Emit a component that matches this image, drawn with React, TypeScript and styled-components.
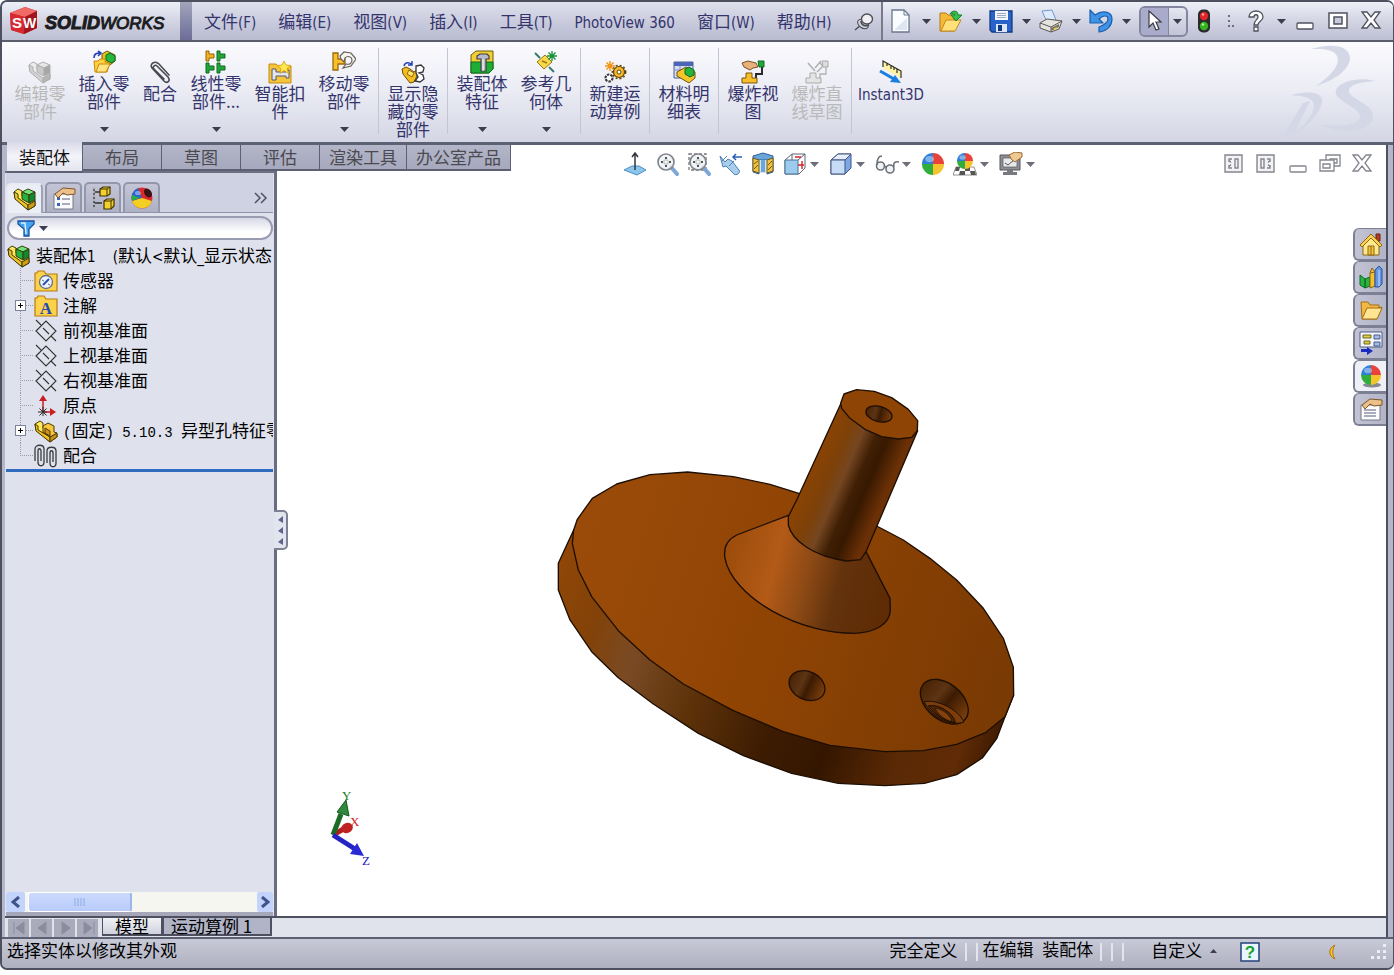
import React from "react";
import styled, { createGlobalStyle, css } from "styled-components";

const ink = "#34346c";
const cjk = '"Noto Sans CJK SC", sans-serif';
const ui = '"DejaVu Sans Condensed", "Noto Sans", "Noto Sans CJK SC", sans-serif';

const GlobalStyle = createGlobalStyle`
  * { box-sizing: border-box; }
  body { margin: 0; background: #fdfdfe; font-family: ${cjk}; font-size: 17px; color: #000; }
  button { font: inherit; color: inherit; background: none; border: 0; padding: 0; margin: 0; }
  svg { display: block; flex: none; }
`;

/* ---------- shell ---------- */
const Page = styled.div`
  height: 100vh;
  min-height: 640px;
  padding-bottom: 5px;
`;
const Window = styled.div`
  height: 100%;
  display: flex;
  flex-direction: column;
  border: 2px solid #4e5060;
  border-width: 2px 1px 2px 2px;
  border-radius: 7px;
  overflow: hidden;
  background: #b4b7cb;
`;
const TitleBar = styled.header`
  display: flex;
  height: 40px;
  flex: none;
  border-bottom: 2px solid #5b5d6d;
  background: linear-gradient(#eef0f8, #d5d7e5 45%, #bdbfd3);
`;
const Brand = styled.div`
  display: flex;
  align-items: center;
  gap: 6px;
  width: 178px;
  padding-left: 7px;
  flex: none;
`;
const BrandName = styled.div`
  display: flex;
  align-items: baseline;
  font: italic 17px/20px "Liberation Sans", sans-serif;
  color: #1c1c22;
  margin-top: 4px;
  -webkit-text-stroke: 1px #1c1c22;
  b { font-size: 18px; }
`;
const BrandEdge = styled.div`
  width: 12px;
  flex: none;
  background: linear-gradient(#a2a4bb, #6b6d98);
`;
const MenuBar = styled.nav`
  display: flex;
  align-items: center;
  gap: 22px;
  padding: 2px 7px 0 12px;
  color: ${ink};
  background: linear-gradient(#dfe0ec, #c6c8db 60%, #b9bbcf);
  border-right: 2px solid #77798c;
`;
const MenuButton = styled.button`
  line-height: 24px;
  white-space: nowrap;
`;
const Latin = styled.span`
  font-family: ${ui};
  font-size: 15px;
`;
const Mono = styled.span`
  font-family: "Liberation Mono", monospace;
  font-size: 14px;
`;
const QuickBar = styled.div`
  display: flex;
  flex: 1;
  align-items: center;
  padding: 0 11px 0 6px;
`;
const QuickButton = styled.button<{ $w?: number }>`
  width: ${(p) => p.$w ?? 50}px;
  height: 28px;
  display: flex;
  align-items: center;
  gap: 9px;
  flex: none;
`;
const SelectTool = styled.div`
  display: flex;
  width: 49px;
  height: 31px;
  flex: none;
  margin-right: 4px;
  border: 2px solid #8486a0;
  border-radius: 6px;
  overflow: hidden;
  button { display: grid; place-items: center; flex: 1; }
  button:first-child { flex: 0 0 28px; background: #a9abca; border-right: 1px solid #8486a0; }
`;
const WindowControls = styled.div`
  display: flex;
  gap: 11px;
  margin-left: auto;
`;

/* ---------- ribbon ---------- */
const Ribbon = styled.section`
  display: flex;
  height: 103px;
  flex: none;
  padding-left: 6px;
  border-bottom: 3px solid #5d6174;
  background: linear-gradient(#fbfbfe, #eeeff6 40%, #d4d6e5);
  position: relative;
`;
const RibbonItem = styled.button<{ $narrow?: boolean; $wide?: boolean; $menu?: boolean; $off?: boolean }>`
  width: ${(p) => (p.$narrow ? 48 : p.$wide ? 74 : 64)}px;
  flex: none;
  display: flex;
  flex-direction: column;
  align-items: center;
  padding: ${(p) => (p.$menu ? 8 : 18)}px 0 10px;
  line-height: 18px;
  white-space: pre;
  color: ${(p) => (p.$off ? "#b9b9b9" : ink)};
  > svg:last-child:not(:first-child) { margin-top: auto; }
`;
const RibbonRule = styled.div`
  width: 1px;
  flex: none;
  margin: 6px 2px 8px;
  background: #c3c5d3;
`;
const Watermark = styled.div`
  margin-left: auto;
  padding: 2px 16px 0 0;
`;

/* ---------- workspace ---------- */
const Workspace = styled.main`
  flex: 1;
  min-height: 0;
  display: flex;
  flex-direction: column;
  margin: 0 5px 0 3px;
  border-right: 2px solid #4e5060;
  background: #fff;
`;
const TopStrip = styled.div`
  display: flex;
  height: 26px;
  flex: none;
`;
const CommandTabs = styled.div`
  display: flex;
  flex: none;
  padding-left: 2px;
  background: #b4b7cb;
`;
const CommandTab = styled.button<{ $on?: boolean }>`
  min-width: 79px;
  height: 26px;
  padding: 0 9px;
  line-height: 22px;
  color: #4a4a50;
  background: linear-gradient(#b3b5c8, #a6a8bd);
  border: solid #5d5f72;
  border-width: 0 1px 2px 0;
  ${(p) =>
    p.$on &&
    css`
      min-width: 76px;
      margin-top: -3px;
      height: 31px;
      color: #111;
      background: linear-gradient(#d8dae8, #f4f4fa 50%, #e3e4ee);
      position: relative;
      z-index: 1;
    `}
`;
const ViewBar = styled.div`
  display: flex;
  flex: 1;
  align-items: flex-start;
  padding: 7px 13px 0 112px;
`;
const ViewButton = styled.button<{ $menu?: boolean }>`
  display: flex;
  align-items: center;
  gap: 3px;
  width: ${(p) => (p.$menu ? 46 : 32)}px;
  height: 24px;
  flex: none;
`;
const DocControls = styled.div`
  display: flex;
  gap: 10px;
  margin-left: auto;
  button { height: 24px; display: grid; place-items: center; }
`;
const Body = styled.div`
  display: flex;
  flex: 1;
  min-height: 0;
`;
const Panel = styled.aside`
  display: flex;
  flex-direction: column;
  width: 272px;
  flex: none;
  background: #dfe2ec;
  border-top: 2px solid #6d6f84;
  border-right: 3px solid #6a6c80;
  padding: 0 1px;
`;
const PanelTabs = styled.div`
  display: flex;
  height: 40px;
  flex: none;
  align-items: flex-end;
  gap: 2px;
  border-bottom: 1px solid #8f92a8;
  background: #cfd2e3;
`;
const PanelTab = styled.button<{ $on?: boolean }>`
  width: 37px;
  height: 30px;
  display: grid;
  place-items: center;
  border: 2px solid #9496aa;
  border-bottom: 0;
  border-radius: 5px 5px 0 0;
  background: linear-gradient(#c3c5d6, #aeb0c4);
  ${(p) => p.$on && css`background: #eceef5; border-color: #e8e9f2; border-right-color: #a0a2b6; margin-bottom: -1px;`}
`;
const Expand = styled.button`
  margin: 0 5px 8px auto;
`;
const Filter = styled.label`
  display: flex;
  align-items: center;
  gap: 4px;
  height: 24px;
  flex: none;
  margin: 3px 0 3px 1px;
  padding: 0 8px;
  border: 2px solid #9a9cb2;
  border-radius: 12px;
  background: linear-gradient(#d6d8e6, #fff 70%);
  input { flex: 1; min-width: 0; border: 0; background: none; outline: 0; font: 14px ${ui}; }
`;
const Tree = styled.ul`
  list-style: none;
  margin: 0;
  padding: 0;
  border-bottom: 3px solid #2f6cc0;
  overflow: hidden;
  flex: none;
`;
const Branch = styled.ul`
  list-style: none;
  margin: 0 0 0 14px;
  padding: 0 0 1px;
`;
const TreeLabel = styled.span`
  padding-bottom: 2px;
  flex: none;
`;
const TreeRow = styled.div`
  display: flex;
  align-items: center;
  height: 25px;
  padding-left: 1px;
  gap: 5px;
  white-space: pre;
`;
const TreeItem = styled.li<{ $last?: boolean }>`
  display: flex;
  align-items: center;
  height: 25px;
  white-space: pre;
  background:
    repeating-linear-gradient(#9a9ca6 0 1px, transparent 1px 2px) 0 0 / 1px ${(p) => (p.$last ? "50%" : "100%")} no-repeat,
    repeating-linear-gradient(90deg, #9a9ca6 0 1px, transparent 1px 2px) 0 50% / 14px 1px no-repeat;
  > svg { margin: 0 5px 0 14px; }
  > button + svg { margin-left: 8px; }
`;
const Toggle = styled.button`
  width: 11px;
  height: 11px;
  flex: none;
  margin-left: -5px;
  border: 1px solid #7c8499;
  background: #fff linear-gradient(#000, #000) 50% 50% / 5px 1px no-repeat;
  display: grid;
  place-items: center;
  &::after { content: ""; width: 1px; height: 5px; background: #000; }
`;
const ScrollBar = styled.div`
  display: flex;
  align-items: center;
  height: 24px;
  flex: none;
  margin-top: auto;
  gap: 3px;
  background: #f6f6f1;
  border-bottom: 4px solid #a6a8b9;
  button { width: 19px; height: 20px; border-radius: 2px; background: #c4d3fb; display: grid; place-items: center; }
  button:last-child { margin-left: auto; width: 16px; }
`;
const Thumb = styled.div`
  width: 104px;
  height: 20px;
  border: 1px solid #fff;
  border-right: 2px solid #9fb5ea;
  border-radius: 3px;
  background: linear-gradient(#cbdafd, #b9cbfa);
  display: grid;
  place-items: center;
`;

/* ---------- graphics area ---------- */
const Viewport = styled.section`
  flex: 1;
  min-width: 0;
  position: relative;
`;
const PanelGrip = styled.button`
  position: absolute;
  left: -3px;
  top: 339px;
  width: 14px;
  height: 40px;
  display: grid;
  place-items: center;
  background: #e3e5ee;
  border: 2px solid #7e8094;
  border-left: 0;
  border-radius: 0 5px 5px 0;
`;
const Triad = styled.div`
  position: absolute;
  left: 49px;
  bottom: 49px;
`;
const TaskPane = styled.div`
  position: absolute;
  right: 0;
  top: 57px;
  display: flex;
  flex-direction: column;
`;
const TaskTab = styled.button<{ $on?: boolean }>`
  width: 33px;
  height: 33px;
  display: grid;
  place-items: center;
  border: 2px solid #7d8094;
  border-width: 1px 0 2px 2px;
  border-radius: 6px 0 0 6px;
  background: ${(p) => (p.$on ? "#eff0f5" : "linear-gradient(90deg, #c2c4d4, #b2b4c7)")};
`;
const SheetBar = styled.div`
  display: flex;
  height: 21px;
  flex: none;
  padding-left: 3px;
  border-top: 2px solid #4e5060;
  background: #e0e3ec;
`;
const SheetNav = styled.div`
  display: flex;
  gap: 2px;
  padding: 1px 4px 0 0;
  button { width: 21px; background: #a9abbb; display: grid; place-items: center; }
`;
const SheetTab = styled.button<{ $on?: boolean }>`
  min-width: ${(p) => (p.$on ? 61 : 109)}px;
  padding: 0 ${(p) => (p.$on ? 12 : 7)}px;
  text-align: left;
  line-height: 14px;
  height: 18px;
  border: solid #4e5060;
  border-width: 0 2px 2px 1px;
  background: ${(p) => (p.$on ? "linear-gradient(#f1f2f7, #cfd1dd)" : "#b1b3c6")};
`;

/* ---------- status bar ---------- */
const StatusBar = styled.footer`
  display: flex;
  align-items: center;
  height: 31px;
  flex: none;
  padding: 0 5px;
  border-top: 2px solid #5d6072;
  background: linear-gradient(#c9cad8, #aeb0bf);
  line-height: 24px;
  > span, > button { white-space: pre; margin-bottom: 7px; }
  > i, > svg, > div { margin-bottom: 4px; }
`;
const StatusGap = styled.div`
  flex: 1;
`;
const StatusRule = styled.i<{ $first?: boolean; $last?: boolean }>`
  width: 2px;
  height: 18px;
  margin-left: ${(p) => (p.$first ? 7 : 0)}px;
  margin-right: ${(p) => (p.$last ? 5 : 9)}px;
  background: #e4e5ec;
  flex: none;
`;
const CustomButton = styled.button`
  display: flex;
  align-items: center;
  gap: 3px;
  margin: 0 22px;
`;
const MoonSlot = styled.div`
  padding: 0 32px 0 68px;
`;

/* ---------- icon drawings ---------- */
type IconProps = { size?: number; box?: number; children: React.ReactNode };
const Icon = ({ size = 24, box = 24, children }: IconProps) => (
  <svg width={size} height={size} viewBox={`0 0 ${box} ${box}`} fill="none" aria-hidden="true">
    {children}
  </svg>
);
const Caret = ({ up, color = "#3c3e50" }: { up?: boolean; color?: string }) => (
  <svg width="9" height="5" viewBox="0 0 9 5" aria-hidden="true">
    <path d={up ? "M1 5h7L4.500 1z" : "M0 0h9L4.500 5z"} fill={color} />
  </svg>
);

const AsmShape = ({ gray }: { gray?: boolean }) => {
  const c = gray
    ? ["#ececec", "#d2d2d2", "#b4b4b4", "#e6e6e6", "#cacaca", "#a6a6a6", "#b0b0b0"]
    : ["#ffe95a", "#edc324", "#d39d12", "#6ce576", "#25b040", "#0f8a2e", "#3d3a10"];
  return (
    <g stroke={c[6]} strokeWidth="1" strokeLinejoin="round">
      <path d="M1 5l4-3 4 2v5l4 3 9 1v6l-7 4L2 11z" fill={c[0]} />
      <path d="M1 5l4 2v4l10 7v5L2 12z" fill={c[1]} />
      <path d="M15 18l7-4v5l-7 4z" fill={c[2]} />
      <path d="M9 5l6-3 7 3-6 3z" fill={c[3]} />
      <path d="M9 5l7 3v8l-7-4z" fill={c[4]} />
      <path d="M16 8l6-3v8l-6 3z" fill={c[5]} />
    </g>
  );
};
const AsmIcon = ({ gray }: { gray?: boolean }) => <Icon><AsmShape gray={gray} /></Icon>;
const PartIcon = () => (
  <Icon>
    <g stroke="#4a3a05" strokeWidth="1" strokeLinejoin="round">
      <path d="M1 5l5-3 3 2v5l10 6 4 0v3l-7 5L2 11z" fill="#ffe95a" />
      <path d="M1 5l3 2v4l12 7v5L2 12z" fill="#edbf20" />
      <path d="M16 18l7-4v4l-7 5z" fill="#c8920f" />
      <path d="M9 7l5-3 6 3v6l3 1-7 4-7-5z" fill="#f7c63c" />
      <path d="M11 9l5 3v5l-5-3z" fill="#d98e1a" />
    </g>
  </Icon>
);
const InsertIcon = () => (
  <Icon>
    <path d="M2 8c0-4 2-5 6-5M6 1l3 2-3 3" stroke="#2340b8" strokeWidth="1.600" />
    <path d="M10 4l5-3 8 4v6l-5 4-8-5z" fill="#e3c21b" stroke="#6d5a08" />
    <path d="M14 5l4-2 5 3v5l-4 2-5-3z" fill="#25b83c" stroke="#0b6a20" />
    <path d="M2 11h4l2-2h5v3l5 1-3 9H3z" fill="#ffcf3f" stroke="#c88a10" />
    <path d="M4 22l3-8h11l-4 8z" fill="#ffe582" stroke="#c88a10" />
  </Icon>
);
const ClipIcon = () => (
  <Icon>
    <path d="M21 15L11 4C7 0 1 4 4 8l12 13c3 3 7 0 4-4L9 6C7 4 4 7 6 9l10 10" stroke="#4a4a50" strokeWidth="1.600" strokeLinecap="round" />
  </Icon>
);
const Bolt = ({ x, y, c, d }: { x: number; y: number; c: string; d: string }) => (
  <g transform={`translate(${x} ${y})`}>
    <path d="M0 0h3v3h5v4H3v3H0z" fill={c} stroke={d} />
  </g>
);
const PatternIcon = () => (
  <Icon>
    <Bolt x={2} y={1} c="#f0b01f" d="#946408" />
    <Bolt x={13} y={1} c="#22a63a" d="#0c6a20" />
    <Bolt x={2} y={13} c="#22a63a" d="#0c6a20" />
    <Bolt x={13} y={13} c="#22a63a" d="#0c6a20" />
  </Icon>
);
const SmartIcon = () => (
  <Icon>
    <path d="M1 4h7l2 2h13v17H1z" fill="#f7c53b" stroke="#c28a12" />
    <path d="M4 9h4v3h10v-2h3v8h-3v-2H8v4H4z" fill="#e2e4ee" stroke="#56586a" />
    <path d="M16 1l2 4 5 .5-4 3 1.500 5-4.500-3-4 3 1-5-4-3 5-.5z" fill="#ffe94d" stroke="#d09a10" strokeWidth=".8" />
  </Icon>
);
const MoveIcon = () => (
  <Icon>
    <path d="M1 3h5v6h7v5H6v6H1z" fill="#f9c02b" stroke="#9a6a0c" strokeWidth="1.300" />
    <path d="M8 6l4-4 7 1 5 6-5 7-8 2 3-4c4 1 6-1 6-4s-4-5-7-2l-1 4-3-3z" fill="#f6f3ee" stroke="#6a625c" strokeWidth="1.200" />
  </Icon>
);
const ShowHideIcon = () => (
  <Icon>
    <path d="M3 6c1-4 5-4 7-2M11 1v4H7" stroke="#2340b8" strokeWidth="1.500" />
    <path d="M1 9l4-2 4 2 4 3 3-2v6l-3 6-4 1-7-9z" fill="#f3bd22" stroke="#6c4e06" />
    <path d="M8 10l5 3-2 4-5-3z" fill="#ffe46a" stroke="#6c4e06" strokeWidth=".8" />
    <path d="M15 6l5-1 3 3-1 4-4 1 4 2 1 4-4 3-5-1 3-4-2-4z" fill="#fff" stroke="#34343a" strokeWidth="1.300" />
  </Icon>
);
const FeatureIcon = () => (
  <Icon>
    <path d="M1 5l5-4h17v18l-4 4H1z" fill="#f3cf35" stroke="#6b5a0a" />
    <path d="M1 12h22v7l-4 4H1z" fill="#1fae34" stroke="#0c6a20" />
    <path d="M7 6l3-2h7l2 2v3h-3v12h-5V9H7z" fill="#b9bcc8" stroke="#3c3e48" strokeWidth="1.200" />
    <path d="M13 9v12" stroke="#fff" />
  </Icon>
);
const RefGeoIcon = () => (
  <Icon>
    <path d="M1 3l5 5M15 17l5 5" stroke="#2f7a6a" strokeWidth="1.800" />
    <path d="M3 12l8-7 7 7-8 7z" fill="#f7d84a" stroke="#9a7610" />
    <path d="M8 11l5 2" stroke="#9a7610" strokeWidth="1.500" />
    <path d="M18 1v10M13 6h10M14.500 2.500l7 7M21.500 2.500l-7 7" stroke="#149334" strokeWidth="1.300" />
  </Icon>
);
const MotionIcon = () => (
  <Icon>
    <circle cx="16" cy="12" r="5.500" fill="#f6b92a" stroke="#5e4208" strokeWidth="1.200" />
    <circle cx="16" cy="12" r="6.700" stroke="#5e4208" strokeWidth="1.400" strokeDasharray="2 2" />
    <circle cx="16" cy="12" r="2" fill="#fff" stroke="#5e4208" />
    <circle cx="6" cy="18" r="3.500" fill="#fff" stroke="#3a3a3f" strokeWidth="2.200" strokeDasharray="2.500 1" />
    <path d="M7 1v10M2 6h10M3.500 2.500l7 7M10.500 2.500l-7 7" stroke="#f29313" strokeWidth="1.400" />
  </Icon>
);
const BomIcon = () => (
  <Icon>
    <path d="M2 2h19v16H2z" fill="#d6dcf2" stroke="#4b5c96" />
    <path d="M2 2h19v4H2z" fill="#4a66b5" />
    <path d="M2 10h19M8 6v12" stroke="#8090c4" />
    <path d="M5 12l9-5 9 5v6l-6 5-12-7z" fill="#f4c62a" stroke="#6e5408" />
    <path d="M13 9l4-2 5 3v5l-4 2-5-3z" fill="#27b33c" stroke="#0c6a20" />
  </Icon>
);
const ExplodeIcon = ({ gray }: { gray?: boolean }) => (
  <Icon>
    {gray ? (
      <path d="M3 3l7 8M10 8l6-7M15 3l3 3-6 6" stroke="#b0b0b0" strokeWidth="1.500" />
    ) : (
      <path d="M1 3l6-2 8 2 2 4-5 1-3 2-6-3z" fill="#e9b27c" stroke="#7c4d22" />
    )}
    <path d="M21 6v8h-6v5h-3" stroke={gray ? "#b0b0b0" : "#2a2a2a"} strokeWidth={gray ? 1.3 : 2} />
    <path d="M17 1h6v6h-5z" fill={gray ? "#ddd" : "#22a63a"} stroke={gray ? "#aaa" : "#0c6a20"} />
    <path d="M5 13h6v5h5v5H1v-5h4z" fill={gray ? "#e4e4e4" : "#f8be2a"} stroke={gray ? "#aaa" : "#7c5606"} />
  </Icon>
);
const Instant3DIcon = () => (
  <Icon>
    <path d="M4 1l18 9v8L4 8z" fill="#fff3a3" />
    <path d="M4 7V1l18 10v7M8 3v3M12 5v4M15 7v3M18 9v4" stroke="#2c2c2c" strokeWidth="1.200" />
    <path d="M1 11l14 8" stroke="#1b7fdc" strokeWidth="3" />
    <path d="M22 23l-11-1 5-7z" fill="#1b7fdc" />
  </Icon>
);
const ribbonIcons: Record<string, React.ReactNode> = {
  edit: <AsmIcon gray />, insert: <InsertIcon />, mate: <ClipIcon />, pattern: <PatternIcon />,
  smart: <SmartIcon />, move: <MoveIcon />, show: <ShowHideIcon />, feature: <FeatureIcon />,
  ref: <RefGeoIcon />, motion: <MotionIcon />, bom: <BomIcon />, explode: <ExplodeIcon />,
  line: <ExplodeIcon gray />, instant: <Instant3DIcon />,
};

const BrandCube = () => (
  <svg width="30" height="30" viewBox="0 0 30 30" aria-hidden="true">
    <path d="M1 7L16 1l12 4v17l-13 6L2 24z" fill="#c8202a" />
    <path d="M1 7L16 1l12 4-12 6z" fill="#ef6a66" />
    <path d="M1 7l15 4-1 17-13-4z" fill="#d62a30" />
    <path d="M16 11l12-6v17l-13 6z" fill="#a3141f" />
    <text x="3" y="22" fontFamily="Liberation Sans" fontWeight="700" fontSize="15" fill="#fff">S</text>
    <text x="14" y="22" fontFamily="Liberation Sans" fontWeight="700" fontSize="14" fill="#fff">W</text>
  </svg>
);
const PinIcon = () => (
  <Icon size={20} box={20}>
    <path d="M1 18l6-5" stroke="#4d4d55" strokeWidth="1.500" />
    <ellipse cx="9" cy="12" rx="6" ry="4" transform="rotate(35 9 12)" fill="#cfcfd6" stroke="#4d4d55" />
    <ellipse cx="13" cy="7" rx="5.500" ry="5" fill="#f0f0f4" stroke="#4d4d55" strokeWidth="1.400" />
    <path d="M7 9c0 4 4 6 8 4" stroke="#4d4d55" strokeWidth="1.500" />
  </Icon>
);
const DocIcon = () => (
  <Icon>
    <path d="M3 1h12l5 5v17H3z" fill="#fafcff" stroke="#6a788e" strokeWidth="1.300" />
    <path d="M5 21h13V9z" fill="#dde6f0" />
    <path d="M15 1v5h5" stroke="#6a788e" />
  </Icon>
);
const OpenIcon = () => (
  <Icon>
    <path d="M1 4h6l2 2h6v16H1z" fill="#f5b93a" stroke="#b77b14" />
    <path d="M2 22L7 11h15l-6 11z" fill="#ffe07a" stroke="#c48a18" />
    <path d="M11 5c2-4 8-4 8 1h4l-6 6-5-6h4c0-2-3-2-5-1z" fill="#35c24a" stroke="#15802a" />
  </Icon>
);
const SaveIcon = () => (
  <Icon>
    <path d="M1 2h22v21H3l-2-2z" fill="#2763c8" stroke="#123a80" strokeWidth="1.300" />
    <path d="M6 2h13v9H6z" fill="#f2f5fb" />
    <path d="M8 4.500h9M8 6.500h9M8 8.500h9" stroke="#8896b0" strokeWidth=".8" />
    <path d="M7 15h11v8H7z" fill="#dde6f6" />
    <path d="M9 16h4v6H9z" fill="#123a80" />
  </Icon>
);
const PrintIcon = () => (
  <Icon>
    <path d="M3 2l10-1 4 10-9 2z" fill="#dceaff" stroke="#7696c8" />
    <path d="M1 14l7-4 15 2-3 8-8 3-11-4z" fill="#e6e4e0" stroke="#5c5850" />
    <path d="M1 14l11 4 11-6M12 18v5" stroke="#5c5850" />
    <path d="M12 19l8-4v3l-8 4z" fill="#77746c" />
    <path d="M15 20l3-1" stroke="#f0d020" strokeWidth="1.500" />
  </Icon>
);
const UndoIcon = () => (
  <Icon>
    <path d="M1 1v13h13l-4-4c4-4 9-4 9 0 0 4-4 6-9 8v5c9-1 13-7 13-13 0-8-10-9-17-4z" fill="#3f93e6" stroke="#1a5fae" strokeWidth="1.200" strokeLinejoin="round" />
  </Icon>
);
const CursorIcon = () => (
  <Icon size={22} box={22}>
    <path d="M6 1v16l4-4 3 7 3-1-3-7h5z" fill="#fff" stroke="#3c3c46" strokeWidth="1.200" />
  </Icon>
);
const TrafficIcon = () => (
  <Icon>
    <rect x="6" y="0.500" width="12" height="23" rx="5" fill="#2a2a2c" />
    <circle cx="12" cy="7" r="4.200" fill="#e0242a" />
    <circle cx="12" cy="17" r="4.200" fill="#35b321" />
    <circle cx="11" cy="5.500" r="1.300" fill="#ff9d98" />
    <circle cx="11" cy="15.500" r="1.300" fill="#b2f29a" />
  </Icon>
);
const DotsIcon = () => (
  <Icon>
    <path d="M8 6h2v2H8zM8 11h2v2H8zM8 16h2v2H8zM12 16h2v2h-2z" fill="#6b6d7e" />
  </Icon>
);
const HelpIcon = () => (
  <Icon>
    <path d="M5 8c0-8 14-8 14 0 0 4-5 4-5 8h-4c0-5 4-5 4-8 0-3-4-3-4 0zM10 18h4v4h-4z" fill="#fff" stroke="#50525f" strokeWidth="1.300" />
  </Icon>
);
const MinIcon = ({ color = "#50525f" }: { color?: string }) => (
  <svg width="22" height="22" viewBox="0 0 22 22" aria-hidden="true">
    <rect x="3" y="13" width="16" height="6" rx="1" fill="#fff" stroke={color} strokeWidth="1.300" />
  </svg>
);
const MaxIcon = () => (
  <svg width="22" height="22" viewBox="0 0 22 22" aria-hidden="true">
    <path d="M2 3h18v15H2z" fill="#fff" stroke="#50525f" strokeWidth="1.500" />
    <path d="M7 7h8v7H7z" fill="#c9cbdc" stroke="#50525f" strokeWidth="1.500" />
  </svg>
);
const CloseIcon = ({ color = "#50525f" }: { color?: string }) => (
  <svg width="22" height="22" viewBox="0 0 22 22" aria-hidden="true">
    <path d="M2 2h5l4 5 4-5h5l-6 8 6 8h-5l-4-5-4 5H2l6-8z" fill="#fff" stroke={color} strokeWidth="1.300" />
  </svg>
);
const RestoreIcon = () => (
  <svg width="22" height="22" viewBox="0 0 22 22" fill="#fff" stroke="#84868f" strokeWidth="1.300" aria-hidden="true">
    <path d="M7 2h14v11H7z" /><path d="M11 6h7v4h-7z" /><path d="M1 7h14v11H1z" /><path d="M4 11h7v4H4z" />
  </svg>
);
const SplitIcon = ({ flip }: { flip?: boolean }) => (
  <svg width="22" height="22" viewBox="0 0 22 22" fill="none" stroke="#84868f" strokeWidth="1.400" aria-hidden="true">
    <path d="M2 2h17v17H2z" fill="#f3f3f5" />
    <g transform={flip ? "matrix(-1 0 0 1 21 0)" : undefined}>
      <path d="M12 6h3v9h-3zM9 6H6v3M6 12v3h3" />
      <path d="M6 7.500l2 2M6 13.500l2-2" />
    </g>
  </svg>
);

/* heads-up view toolbar */
const NormalIcon = () => (
  <Icon>
    <path d="M1 18l8-4h7l7 4-9 5z" fill="#8cc5ee" stroke="#4f8fc0" />
    <path d="M12 18V2M9 5l3-4 3 4" stroke="#33343c" strokeWidth="1.500" />
  </Icon>
);
const ZoomFitIcon = ({ area }: { area?: boolean }) => (
  <Icon>
    {area && <path d="M2 2h17v16H2z" stroke="#777" strokeWidth="1.300" strokeDasharray="3 2" />}
    <path d="M16 15l6 7" stroke="#7ea6d8" strokeWidth="4" strokeLinecap="round" />
    <circle cx="11" cy="10" r="8" fill="#eef1f5" fillOpacity=".8" stroke="#85878f" strokeWidth="1.700" />
    <path d="M11 5v2M11 13v2M6 10h2M14 10h2" stroke="#555" strokeWidth="2" />
    <path d="M9 8h4v4H9z" stroke="#bbb" />
  </Icon>
);
const PrevViewIcon = () => (
  <Icon>
    <path d="M1 4l5 6 3-3 4 2 7 9c2 3-3 6-5 4l-8-8-3 1z" fill="#a9cdec" stroke="#4a82b4" />
    <path d="M3 9l5-5M10 14l5-5" stroke="#4a82b4" />
    <path d="M14 5h9M17 2l-3 3 3 3" stroke="#2b62b8" strokeWidth="1.500" />
  </Icon>
);
const SectionIcon = () => (
  <Icon>
    <path d="M2 4l10-3 10 3v16l-6 2V8H8v14l-6-2z" fill="#6aa6da" stroke="#2f5e90" />
    <path d="M8 8h8v13H8z" fill="#cfe4f6" />
    <path d="M10 8h4v12h-4z" fill="#6aa6da" />
    <path d="M2 6l6 2v13l-6-2zM16 8l6-2v13l-6 2z" fill="#f3c23a" stroke="#6e5a18" />
    <path d="M3 12l4-3M3 17l4-4M17 13l4-4M17 18l4-4" stroke="#6e5a18" />
  </Icon>
);
const OrientIcon = () => (
  <Icon>
    <path d="M2 8l7-6h13v14l-6 6H2z" fill="#fff" stroke="#5a6273" />
    <path d="M2 8h13v14H2z" fill="#9ccbee" stroke="#4a7296" />
    <path d="M15 8l7-6M9 2v6" stroke="#5a6273" />
    <path d="M12 5h6M19 9v8M15 13h6" stroke="#d3222a" strokeWidth="1.400" />
  </Icon>
);
const CubeIcon = () => (
  <Icon>
    <path d="M2 8l7-6h13v14l-6 6H2z" fill="#7da7e4" stroke="#44547e" />
    <path d="M2 8l7-6h13l-6 6z" fill="#e6effb" stroke="#44547e" />
    <path d="M2 8h14v14H2z" fill="#c5dbf6" stroke="#44547e" />
  </Icon>
);
const GlassesIcon = () => (
  <Icon>
    <g stroke="#6d7078" strokeWidth="1.600">
      <circle cx="5.500" cy="14" r="4" fill="#eef3f6" /><circle cx="15" cy="17" r="4" fill="#eef3f6" />
      <path d="M2 13c0-6 2-9 5-9M19 15c-1-4 1-6 5-5M9 14l2 1" />
    </g>
  </Icon>
);
const BallShape = ({ cx = 12, cy = 12, r = 11 }) => (
  <g>
    <path d={`M${cx} ${cy}V${cy - r}A${r} ${r} 0 0 0 ${cx - r} ${cy}z`} fill="#2d7fd8" />
    <path d={`M${cx} ${cy}H${cx + r}A${r} ${r} 0 0 0 ${cx} ${cy - r}z`} fill="#e8423a" />
    <path d={`M${cx} ${cy}V${cy + r}A${r} ${r} 0 0 0 ${cx + r} ${cy}z`} fill="#f5c42c" />
    <path d={`M${cx} ${cy}H${cx - r}A${r} ${r} 0 0 0 ${cx} ${cy + r}z`} fill="#2fae3c" />
    <ellipse cx={cx - r * 0.3} cy={cy - r * 0.45} rx={r * 0.4} ry={r * 0.28} fill="#fff" opacity=".4" />
  </g>
);
const BallIcon = ({ shadow }: { shadow?: boolean }) => (
  <Icon>
    {shadow && <ellipse cx="13" cy="21" rx="9" ry="2.500" fill="#5b5d68" opacity=".7" />}
    <BallShape cy={shadow ? 11 : 12} r={shadow ? 10 : 11} />
  </Icon>
);
const SceneIcon = () => (
  <Icon>
    <path d="M3 15h18l3 8H0z" fill="#fff" stroke="#777" strokeWidth=".8" />
    <path d="M3 15h4l-1 4H2zM12 15h5v4h-5zM7 19h5v4H6zM17 19h5l1 4h-5z" fill="#555" />
    <BallShape cx={12} cy={9} r={8} />
  </Icon>
);
const MonitorIcon = () => (
  <Icon>
    <path d="M1 3h20v15H1z" fill="#8e9094" stroke="#55575c" />
    <path d="M4 6h14v9H4z" fill="#e8e9ea" stroke="#55575c" strokeWidth=".7" />
    <path d="M8 18h6v2h4v3H4v-3h4z" fill="#77797e" />
    <path d="M6 11l3 2 6-5" stroke="#555" />
    <path d="M10 3l6-3 7 1v4l-7 5-3-2z" fill="#f0c892" stroke="#976a3a" />
  </Icon>
);

/* panel and tree */
const PropIcon = ({ plain }: { plain?: boolean }) => (
  <Icon>
    <path d="M2 8h19v15H2z" fill="#fbfbfb" stroke="#77798a" />
    <path d={plain ? "M5 13h12M5 16h12M5 19h12" : "M10 13h8M10 18h8"} stroke="#8d93a8" strokeWidth="1.500" />
    {!plain && <path d="M5 11h3v3H5zM5 17h3v3H5z" fill="#3b62c4" />}
    <path d="M3 8l8-6 12 1v5l-8 1-4-2-5 5z" fill="#ecc08a" stroke="#7d5525" />
  </Icon>
);
const ConfigIcon = () => (
  <Icon>
    <path d="M3 1v22M3 6h6M3 17h8" stroke="#333" strokeWidth="1.300" />
    <path d="M3 1v22" stroke="#fff" strokeDasharray="2 2" />
    <path d="M9 3l3-2h7v7l-3 2H9z" fill="#f5cf2c" stroke="#3c3206" strokeWidth="1.200" />
    <path d="M13 15l3-2h7v7l-3 3h-7z" fill="#f5cf2c" stroke="#3c3206" strokeWidth="1.200" />
    <path d="M9 3h7v7M16 3l3-2M13 15h7v8M20 15l3-2" stroke="#3c3206" />
  </Icon>
);
const PanelBallIcon = () => (
  <Icon>
    <circle cx="12" cy="12" r="10.500" fill="#d92a2c" />
    <path d="M12 12L2 15A10.500 10.500 0 0 1 8 2z" fill="#2866d0" />
    <path d="M12 12L2 15a10.500 10.500 0 0 0 20 0z" fill="#f3cf24" />
    <path d="M10 12L6 13 2 15A10.500 10.500 0 0 1 2 9z" fill="#2fae3c" />
    <ellipse cx="18" cy="7" rx="3.500" ry="5" fill="#3a1414" transform="rotate(-35 18 7)" />
    <ellipse cx="8" cy="7" rx="3" ry="2" fill="#fff" opacity=".4" />
  </Icon>
);
const FunnelIcon = () => (
  <Icon size={18} box={18}>
    <path d="M1 2h16v3l-5 5v7H7v-7L1 5z" fill="#43a6ee" stroke="#1b4fa0" strokeWidth="1.300" />
    <path d="M4 4h4l1 11" stroke="#d6f0ff" strokeWidth="1.500" />
  </Icon>
);
const FolderBase = () => <path d="M1 4h2l1-2h6l2 3h11v17H1z" fill="#fbd24a" stroke="#b87a14" strokeWidth="1.200" />;
const SensorIcon = () => (
  <Icon>
    <FolderBase />
    <circle cx="12" cy="13" r="6.500" fill="#eef3fb" stroke="#64708c" strokeWidth="1.300" />
    <path d="M9 16l6-6" stroke="#2352b8" strokeWidth="2" />
    <path d="M8 11l2 1M14 15l2 1" stroke="#64708c" />
  </Icon>
);
const NoteIcon = () => (
  <Icon>
    <FolderBase />
    <text x="12" y="20" textAnchor="middle" fontFamily="Liberation Serif" fontWeight="700" fontSize="17" fill="#1f4bb4">A</text>
  </Icon>
);
const PlaneIcon = () => (
  <Icon>
    <path d="M2 12L12 2l10 10-10 10zM2 1l5 5M9 9l6 6M17 17l5 5" stroke="#333" strokeWidth="1.100" />
  </Icon>
);
const OriginIcon = () => (
  <Icon>
    <path d="M9 18V4M9 18h9" stroke="#c81e24" strokeWidth="1.500" />
    <path d="M5 7l4-6 4 6zM16 14l6 4-6 4z" fill="#c81e24" />
    <path d="M9 13v9M4 18h9M5.500 14.500l7 7M12.500 14.500l-7 7" stroke="#2a2a2a" />
  </Icon>
);
const MatesIcon = () => (
  <Icon>
    <path d="M1 17V5c0-5 9-5 9 0v13c0 5-6 5-6 0V7c0-3 3-3 3 0v10M13 19V7c0-5 9-5 9 0v12c0 5-6 5-6 0V9c0-3 3-3 3 0v9" stroke="#3b3b3f" strokeWidth="1.300" />
  </Icon>
);
const HouseIcon = () => (
  <Icon>
    <path d="M17 2h4v7h-4z" fill="#b33a22" stroke="#6e2010" />
    <path d="M4 12l8-8 8 8v11H4z" fill="#ffe98d" stroke="#8e6712" />
    <path d="M1 13L12 2l11 11-2 2-9-9-9 9z" fill="#f9cf55" stroke="#8e6712" />
    <path d="M9 14h6v9H9z" fill="#f6c544" stroke="#8e6712" />
    <path d="M12 14v9" stroke="#8e6712" />
  </Icon>
);
const LibraryIcon = () => (
  <Icon>
    <path d="M1 10l5 4v9l-5-3zM6 14l5-2v9l-5 2z" fill="#2bb344" stroke="#0d6a22" />
    <path d="M11 8l5-1v14l-5 2zM11 8l2-5 3 4" fill="#f5c02e" stroke="#8a6410" />
    <path d="M16 5l4-4 3 3v15l-3 3h-4z" fill="#5f95e4" stroke="#2d5398" />
    <path d="M20 5v16" stroke="#cfe0fb" />
  </Icon>
);
const FolderIcon = () => (
  <Icon>
    <path d="M2 4h7l2 3h9v3l3-1-5 12H3z" fill="#f2b843" stroke="#a36f14" />
    <path d="M3 21L8 10h15l-5 11z" fill="#ffe593" stroke="#a36f14" />
  </Icon>
);
const PaletteIcon = () => (
  <Icon>
    <path d="M1 1h22v15H1z" fill="#f4f6fb" stroke="#4d5d88" />
    <path d="M4 4h8v3H4zM5 10h6v3H5z" fill="#d9cc4d" stroke="#6f6a18" />
    <path d="M15 4h6v4h-6zM15 11h6v4h-6z" fill="#9fbce8" stroke="#4d5d88" />
    <path d="M2 18h6v-2l6 4-6 4v-3H2z" fill="#1a2cc0" />
  </Icon>
);

/* ---------- 3D part ---------- */
const Model = styled.svg`
  width: 100%;
  height: 100%;
`;
const FlangeModel = () => (
  <Model viewBox="277 171 1109 745" preserveAspectRatio="xMidYMid meet" role="img" aria-label="法兰零件">
    <defs>
      <linearGradient id="face" gradientUnits="userSpaceOnUse" x1="150" y1="450" x2="1400" y2="850">
        <stop offset="0" stopColor="#9a4b09" /><stop offset=".45" stopColor="#904404" /><stop offset="1" stopColor="#7a3a03" />
      </linearGradient>
      <linearGradient id="rim" gradientUnits="userSpaceOnUse" x1="55" y1="600" x2="1400" y2="1050">
        <stop offset="0" stopColor="#8f4607" /><stop offset=".1" stopColor="#824208" /><stop offset=".2" stopColor="#7a4a24" />
        <stop offset=".35" stopColor="#5d3209" /><stop offset=".52" stopColor="#3d1c02" /><stop offset=".65" stopColor="#341600" />
        <stop offset=".8" stopColor="#5a2905" /><stop offset=".92" stopColor="#602b06" /><stop offset="1" stopColor="#3a1901" />
      </linearGradient>
      <linearGradient id="shaft" gradientUnits="userSpaceOnUse" x1="820" y1="250" x2="1035" y2="343">
        <stop offset="0" stopColor="#8a4303" /><stop offset=".25" stopColor="#7d4109" /><stop offset=".42" stopColor="#754621" />
        <stop offset=".6" stopColor="#402005" /><stop offset=".75" stopColor="#371900" /><stop offset="1" stopColor="#6b3006" />
      </linearGradient>
      <linearGradient id="cone" gradientUnits="userSpaceOnUse" x1="560" y1="520" x2="1040" y2="650">
        <stop offset="0" stopColor="#9d4c0b" /><stop offset=".3" stopColor="#b35a17" /><stop offset=".5" stopColor="#8e4a15" />
        <stop offset=".7" stopColor="#63330d" /><stop offset="1" stopColor="#5e2b04" />
      </linearGradient>
      <linearGradient id="bore">
        <stop offset="0" stopColor="#4a2406" /><stop offset=".35" stopColor="#5d3414" /><stop offset=".55" stopColor="#3c1b02" /><stop offset="1" stopColor="#7d3f0c" />
      </linearGradient>
    </defs>
    <g transform="translate(540 380) scale(.33333)" stroke="#1d0e02" strokeWidth="4" strokeLinejoin="round">
      <path fill="url(#rim)" d="M101 450L55 550v80l35 90 65 95 80 78 105 79 135 88 135 67 145 53 140 30 140 7 118-7 97-26 77-50 43-58 25-66 26-65L700 500z" />
      <path fill="url(#face)" d="M101 450l11-32 45-63 73-43 100-28 113-8 137 14 110 23 89 28 231 97 80 42 80 55 80 65 80 85 60 90 30 87 1 83-26 65-57 47-88 36-100 19-115 3-165-19-140-41-150-63-150-80-100-72-95-88-80-102-40-80-18-80z" />
      <path fill="url(#cone)" d="M745 406L590 465C560 480 550 505 555 535C565 590 620 650 700 695C780 740 870 760 945 760C1000 758 1050 735 1051 690L1050 655L978 515L880 440z" />
      <path fill="url(#shaft)" d="M902 72L770 360L745 410V435C755 480 820 530 920 543L962 539L978 515L1010 440L1133 152z" />
      <path fill="#8d4404" d="M902 70l10-28 38-13 53 5 52 19 50 35 28 34-1 30-17 20-40 5-50-7-50-22-45-33-25-30z" />
      <ellipse cx="1017" cy="102" rx="40" ry="23" transform="rotate(15 1017 102)" fill="url(#bore)" />
      <ellipse cx="801" cy="917" rx="56" ry="42" transform="rotate(25 801 917)" fill="url(#bore)" />
      <ellipse cx="1213" cy="965" rx="82" ry="54" transform="rotate(40 1213 965)" fill="url(#bore)" />
      <path fill="#7c3d0a" strokeWidth="3" d="M1152 966C1180 955 1255 985 1272 1026C1235 1040 1180 1015 1152 966z" />
      <path fill="#4a2407" strokeWidth="3" d="M1165 978C1190 970 1240 995 1246 1028C1215 1025 1185 1005 1165 978z" />
      <path fill="#83420e" strokeWidth="2" d="M1185 985C1205 985 1232 1005 1236 1025C1215 1020 1195 1005 1185 985z" />
    </g>
  </Model>
);
const TriadDrawing = () => (
  <svg width="50" height="80" viewBox="0 0 50 80" aria-hidden="true">
    <path d="M7 48l14-8" stroke="#b31f1f" strokeWidth="5" />
    <ellipse cx="21" cy="41" rx="6" ry="5" fill="#c02222" transform="rotate(-25 21 41)" />
    <path d="M7 48L15 27" stroke="#1c6b25" strokeWidth="5" />
    <path d="M20 13l3 16-12-4z" fill="#2f8a3c" stroke="#145a1c" />
    <path d="M7 48l22 14" stroke="#2424c4" strokeWidth="5" />
    <path d="M38 69l-14-2 7-11z" fill="#2a2ad4" />
    <text x="16" y="13" fontFamily="Liberation Serif" fontSize="13" fill="#1c7a25">Y</text>
    <text x="24" y="39" fontFamily="Liberation Serif" fontSize="13" fill="#d02020">X</text>
    <text x="36" y="78" fontFamily="Liberation Serif" fontSize="13" fill="#2020c8">Z</text>
  </svg>
);

/* ---------- data ---------- */
const menus: [string, string][] = [
  ["文件", "(F)"], ["编辑", "(E)"], ["视图", "(V)"], ["插入", "(I)"],
  ["工具", "(T)"], ["", "PhotoView 360"], ["窗口", "(W)"], ["帮助", "(H)"],
];
type Cmd = { id: string; text: React.ReactNode; menu?: boolean; off?: boolean; narrow?: boolean; wide?: boolean };
const groups: Cmd[][] = [
  [
    { id: "edit", text: "编辑零\n部件", off: true },
    { id: "insert", text: "插入零\n部件", menu: true },
    { id: "mate", text: "配合", narrow: true },
    { id: "pattern", text: "线性零\n部件...", menu: true },
    { id: "smart", text: "智能扣\n件" },
    { id: "move", text: "移动零\n部件", menu: true },
  ],
  [{ id: "show", text: "显示隐\n藏的零\n部件" }],
  [{ id: "feature", text: "装配体\n特征", menu: true }, { id: "ref", text: "参考几\n何体", menu: true }],
  [{ id: "motion", text: "新建运\n动算例" }],
  [{ id: "bom", text: "材料明\n细表" }],
  [{ id: "explode", text: "爆炸视\n图" }, { id: "line", text: "爆炸直\n线草图", off: true }],
  [{ id: "instant", text: <Latin>Instant3D</Latin>, wide: true }],
];
const commandTabs = ["装配体", "布局", "草图", "评估", "渲染工具", "办公室产品"];
const quick: [string, React.ReactNode][] = [
  ["新建", <DocIcon />], ["打开", <OpenIcon />], ["保存", <SaveIcon />], ["打印", <PrintIcon />], ["撤销", <UndoIcon />],
];
const views: [string, React.ReactNode, boolean][] = [
  ["正视于", <NormalIcon />, false], ["整屏显示全图", <ZoomFitIcon />, false], ["局部放大", <ZoomFitIcon area />, false],
  ["上一视图", <PrevViewIcon />, false], ["剖面视图", <SectionIcon />, false], ["视图定向", <OrientIcon />, true],
  ["显示样式", <CubeIcon />, true], ["隐藏/显示项目", <GlassesIcon />, true], ["编辑外观", <BallIcon />, false],
  ["应用布景", <SceneIcon />, true], ["视图设定", <MonitorIcon />, true],
];
const treeItems: { icon: React.ReactNode; label: React.ReactNode; toggle?: boolean }[] = [
  { icon: <SensorIcon />, label: "传感器" },
  { icon: <NoteIcon />, label: "注解", toggle: true },
  { icon: <PlaneIcon />, label: "前视基准面" },
  { icon: <PlaneIcon />, label: "上视基准面" },
  { icon: <PlaneIcon />, label: "右视基准面" },
  { icon: <OriginIcon />, label: "原点" },
  { icon: <PartIcon />, label: <><Mono>(</Mono>固定<Mono>) 5.10.3 </Mono>异型孔特征零</>, toggle: true },
  { icon: <MatesIcon />, label: "配合" },
];
const taskTabs: [string, React.ReactNode][] = [
  ["资源", <HouseIcon />], ["设计库", <LibraryIcon />], ["文件探索器", <FolderIcon />],
  ["视图调色板", <PaletteIcon />], ["外观", <BallIcon shadow />], ["自定义属性", <PropIcon plain />],
];
const navPaths = ["M5 3v12M15 3v12L7 9z", "M14 3v12L6 9z", "M7 3v12l8-6z", "M6 3v12l8-6zM16 3v12"];

export default function App() {
  return (
    <Page>
      <GlobalStyle />
      <Window>
        <TitleBar>
          <Brand><BrandCube /><BrandName><b>SOLID</b>WORKS</BrandName></Brand>
          <BrandEdge />
          <MenuBar>
            {menus.map(([zh, en]) => (
              <MenuButton key={en}>{zh}<Latin>{en}</Latin></MenuButton>
            ))}
            <MenuButton aria-label="固定菜单"><PinIcon /></MenuButton>
          </MenuBar>
          <QuickBar>
            {quick.map(([name, icon]) => (
              <QuickButton key={name} aria-label={name}>{icon}<Caret /></QuickButton>
            ))}
            <SelectTool>
              <button aria-label="选择"><CursorIcon /></button>
              <button aria-label="选择选项"><Caret /></button>
            </SelectTool>
            <QuickButton $w={28} aria-label="重建模型"><TrafficIcon /></QuickButton>
            <QuickButton $w={24} aria-label="更多"><DotsIcon /></QuickButton>
            <QuickButton aria-label="帮助"><HelpIcon /><Caret /></QuickButton>
            <WindowControls>
              <button aria-label="最小化"><MinIcon /></button>
              <button aria-label="最大化"><MaxIcon /></button>
              <button aria-label="关闭"><CloseIcon /></button>
            </WindowControls>
          </QuickBar>
        </TitleBar>

        <Ribbon>
          {groups.map((group, g) => (
            <React.Fragment key={g}>
              {g > 0 && <RibbonRule />}
              {group.map((c) => (
                <RibbonItem key={c.id} $menu={c.menu} $narrow={c.narrow} $wide={c.wide} $off={c.off} disabled={c.off}>
                  {ribbonIcons[c.id]}
                  <span>{c.text}</span>
                  {c.menu && <Caret />}
                </RibbonItem>
              ))}
            </React.Fragment>
          ))}
          <Watermark>
            <svg width="94" height="96" viewBox="0 0 94 96" fill="#d3d7e6" aria-hidden="true">
              <path d="M28 5C44 0 66 -1 67 14C67 26 50 37 33 42C46 33 58 22 54 12C51 5 40 5 28 5z" />
              <path d="M8 51C26 46 44 48 38 62C31 78 14 92 -1 94L20 59L27 57L12 88C22 82 34 66 30 58C27 53 18 52 8 51z" />
              <path d="M92 37C78 33 58 36 53 46C49 57 78 63 77 73C76 81 58 83 40 81C56 91 88 89 90 73C91 60 66 55 66 47C66 40 80 38 92 37z" />
            </svg>
          </Watermark>
        </Ribbon>

        <Workspace>
          <TopStrip>
            <CommandTabs>
              {commandTabs.map((t, i) => <CommandTab key={t} $on={i === 0}>{t}</CommandTab>)}
            </CommandTabs>
            <ViewBar>
              {views.map(([name, icon, menu]) => (
                <ViewButton key={name} $menu={menu} aria-label={name}>{icon}{menu && <Caret color="#6c6e78" />}</ViewButton>
              ))}
              <DocControls>
                <button aria-label="左窗格"><SplitIcon /></button>
                <button aria-label="右窗格"><SplitIcon flip /></button>
                <button aria-label="最小化文档"><MinIcon color="#84868f" /></button>
                <button aria-label="还原文档"><RestoreIcon /></button>
                <button aria-label="关闭文档"><CloseIcon color="#84868f" /></button>
              </DocControls>
            </ViewBar>
          </TopStrip>

          <Body>
            <Panel>
              <PanelTabs>
                <PanelTab $on aria-label="设计树"><AsmIcon /></PanelTab>
                <PanelTab aria-label="属性"><PropIcon /></PanelTab>
                <PanelTab aria-label="配置"><ConfigIcon /></PanelTab>
                <PanelTab aria-label="外观"><PanelBallIcon /></PanelTab>
                <Expand aria-label="展开">
                  <svg width="14" height="12" viewBox="0 0 14 12" fill="none" stroke="#50525f" strokeWidth="1.500"><path d="M1 1l5 5-5 5M7 1l5 5-5 5" /></svg>
                </Expand>
              </PanelTabs>
              <Filter>
                <FunnelIcon /><Caret />
                <input type="text" aria-label="过滤器" />
              </Filter>
              <Tree>
                <li>
                  <TreeRow>
                    <AsmIcon />
                    <TreeLabel>装配体<Latin>1    (</Latin>默认<Latin>&lt;</Latin>默认<Latin>_</Latin>显示状态</TreeLabel>
                  </TreeRow>
                  <Branch>
                    {treeItems.map((t, i) => (
                      <TreeItem key={i} $last={i === treeItems.length - 1}>
                        {t.toggle && <Toggle aria-label="展开" />}
                        {t.icon}
                        <TreeLabel>{t.label}</TreeLabel>
                      </TreeItem>
                    ))}
                  </Branch>
                </li>
              </Tree>
              <ScrollBar>
                <button aria-label="向左滚动"><svg width="9" height="12" viewBox="0 0 9 12"><path d="M8 1L2 6l6 5" fill="none" stroke="#3c5486" strokeWidth="3" /></svg></button>
                <Thumb><svg width="11" height="8" viewBox="0 0 11 8"><path d="M1 0v8M4 0v8M7 0v8M10 0v8" stroke="#8fa9e6" /></svg></Thumb>
                <button aria-label="向右滚动"><svg width="9" height="12" viewBox="0 0 9 12"><path d="M1 1l6 5-6 5" fill="none" stroke="#3c5486" strokeWidth="3" /></svg></button>
              </ScrollBar>
            </Panel>

            <Viewport>
              <FlangeModel />
              <PanelGrip aria-label="折叠面板">
                <svg width="5" height="30" viewBox="0 0 5 30" fill="#5f6190"><path d="M0 5l5-4v7zM0 16l5-4v7zM0 27l5-4v7z" /></svg>
              </PanelGrip>
              <Triad><TriadDrawing /></Triad>
              <TaskPane>
                {taskTabs.map(([name, icon], i) => (
                  <TaskTab key={name} $on={i === 4} aria-label={name}>{icon}</TaskTab>
                ))}
              </TaskPane>
            </Viewport>
          </Body>

          <SheetBar>
            <SheetNav>
              {navPaths.map((d, i) => (
                <button key={i} aria-label="切换标签">
                  <svg width="20" height="18" viewBox="0 0 20 18" fill="#8b8d9e" stroke="#8b8d9e"><path d={d} /></svg>
                </button>
              ))}
            </SheetNav>
            <SheetTab $on>模型</SheetTab>
            <SheetTab>运动算例 1</SheetTab>
          </SheetBar>
        </Workspace>

        <StatusBar>
          <span>选择实体以修改其外观</span>
          <StatusGap />
          <span>完全定义</span>
          <StatusRule $first /><StatusRule $last />
          <span>在编辑<Latin>  </Latin>装配体</span>
          <StatusRule $first /><StatusRule /><StatusRule $last />
          <CustomButton>自定义 <Caret up /></CustomButton>
          <Icon size={20} box={20}>
            <path d="M1 1h18v18H1z" fill="#eaf6ff" stroke="#23407a" strokeWidth="1.500" />
            <text x="10" y="16" textAnchor="middle" fontFamily="Liberation Sans" fontWeight="700" fontSize="17" fill="#16a32e">?</text>
          </Icon>
          <MoonSlot>
            <svg width="10" height="16" viewBox="0 0 10 16"><path d="M7 1C0 4 0 12 7 15C4 11 4 5 7 1z" fill="#ffc52e" stroke="#a8730e" /></svg>
          </MoonSlot>
          <svg width="18" height="18" viewBox="0 0 18 18" fill="#eceef4"><path d="M13 1h3v3h-3zM7 7h3v3H7zM13 7h3v3h-3zM1 13h3v3H1zM7 13h3v3H7zM13 13h3v3h-3z" /></svg>
        </StatusBar>
      </Window>
    </Page>
  );
}
